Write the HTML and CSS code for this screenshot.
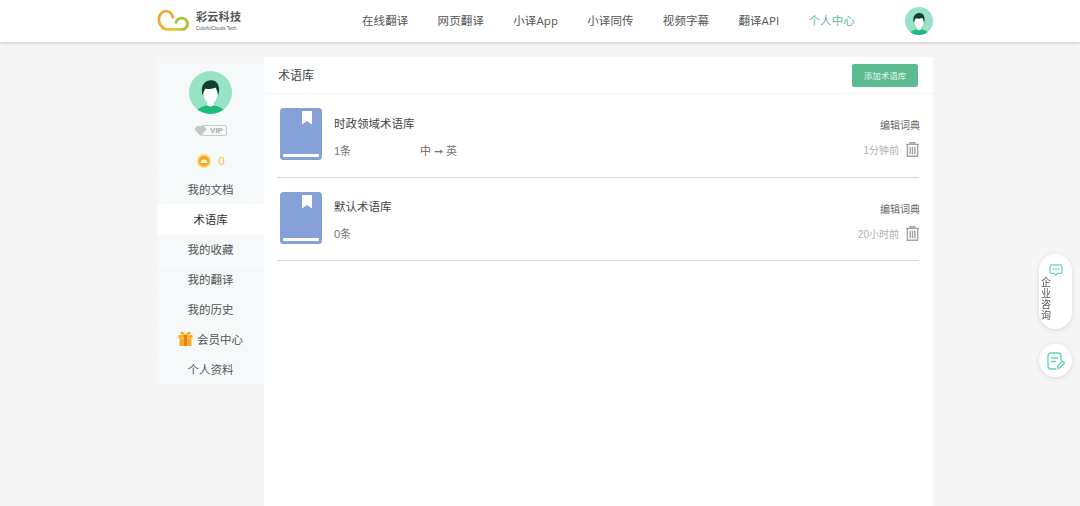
FILE: index.html
```html
<!DOCTYPE html>
<html lang="zh-CN">
<head>
<meta charset="utf-8">
<title>术语库</title>
<link rel="stylesheet" href="styles.css">
</head>
<body>
<svg class="defs" width="0" height="0" aria-hidden="true">
  <defs>
    <symbol id="avatar" viewBox="0 0 44 44">
      <circle cx="22" cy="22" r="22" fill="#98e2c6"/>
      <clipPath id="avclip"><circle cx="22" cy="22" r="22"/></clipPath>
      <g clip-path="url(#avclip)">
        <path d="M6 44c1-6 9-9 16-9s15 3 16 9z" fill="#1dbb7c"/>
        <path d="M18.500 28h7v6.500c-2 2.500-5 2.500-7 0z" fill="#fff"/>
        <ellipse cx="22" cy="24" rx="7" ry="9" fill="#fff"/>
        <path d="M14 25c-2.500-8 .5-15 8-15.500 7-.5 10.500 6 8 15.500-.6-3.500-1.500-6-2.800-8-2.700 1.500-7 1.800-10.200.8-1.500 1.700-2.400 4-3 7.200z" fill="#0f3f2e"/>
      </g>
    </symbol>
    <symbol id="book" viewBox="0 0 42 52">
      <rect width="42" height="52" rx="3.500" fill="#86a1d8"/>
      <rect x="3" y="46" width="36" height="3" rx="1" fill="#fff"/>
      <path d="M22 3h10v13.500l-5-3.500-5 3.500z" fill="#fff"/>
    </symbol>
    <symbol id="trash" viewBox="0 0 14 16">
      <path d="M0 2.500h14M4.500 2.500V.7h5v1.800M1.500 2.500v12.800h11V2.500M4.500 5v8M7 5v8M9.500 5v8" fill="none" stroke="#a4a4a4" stroke-width="1.500"/>
    </symbol>
  </defs>
</svg>

<header class="topbar">
  <div class="topbar-inner">
    <a class="logo" href="#">
      <svg class="logo-mark" viewBox="0 0 34 24" width="32" height="23" aria-hidden="true">
        <defs>
          <linearGradient id="logo-base" x1="0" x2="1" y1="0" y2="0">
            <stop offset="0" stop-color="#f5b035"/>
            <stop offset=".6" stop-color="#e6cb3a"/>
            <stop offset="1" stop-color="#a5c63f"/>
          </linearGradient>
        </defs>
        <path d="M17 8.500C15.500 4 12.500 2 9.500 2 5 2 2 6 2 11c0 4 2 7 5 9" fill="none" stroke="#f2a93b" stroke-width="3" stroke-linecap="round"/>
        <path d="M20 14c1-2.500 3-4.500 6.500-4.500 3 0 6 2.500 6 6 0 2.500-1.500 4.500-3.500 5.500" fill="none" stroke="#a5c63f" stroke-width="3" stroke-linecap="round"/>
        <path d="M5 19.500c2 1.500 4.500 2 7 2h14c1.200 0 2.200-.2 3-.6" fill="none" stroke="url(#logo-base)" stroke-width="3"/>
      </svg>
      <span class="logo-text">
        <span class="logo-cn">彩云科技</span>
        <span class="logo-en">ColorfulClouds Tech.</span>
      </span>
    </a>
    <nav class="nav">
      <a href="#">在线翻译</a>
      <a href="#">网页翻译</a>
      <a href="#">小译App</a>
      <a href="#">小译同传</a>
      <a href="#">视频字幕</a>
      <a href="#">翻译API</a>
      <a href="#" class="current">个人中心</a>
    </nav>
    <svg class="nav-avatar" width="28" height="28"><use href="#avatar"/></svg>
  </div>
</header>

<div class="page">
  <aside class="sidebar">
    <div class="profile">
      <svg class="profile-avatar" width="43" height="43"><use href="#avatar"/></svg>
      <div class="vip">
        <svg width="13" height="10" viewBox="0 0 11 9" aria-hidden="true"><path d="M2.500 0h6L11 3 5.500 9 0 3z" fill="#c4c6c6"/></svg>
        <span class="vip-tag">VIP</span>
      </div>
      <div class="coins">
        <svg width="14" height="14" viewBox="0 0 14 14" aria-hidden="true">
          <circle cx="7" cy="7" r="7" fill="#fbd96a"/>
          <circle cx="7" cy="7" r="5.200" fill="#f2a431"/>
          <path d="M3.500 9c0-2 1.500-3.500 3.500-3.500S10.500 7 10.500 9z" fill="#fff3cf"/>
        </svg>
        <span>0</span>
      </div>
    </div>
    <ul class="menu">
      <li>我的文档</li>
      <li class="active">术语库</li>
      <li>我的收藏</li>
      <li>我的翻译</li>
      <li>我的历史</li>
      <li class="member">
        <svg width="15" height="15" viewBox="0 0 15 15" aria-hidden="true">
          <path d="M7.500 4C5.500.5 3 .2 2.500 1.500 2 3 4 4 7.500 4zM7.500 4c2-3.500 4.500-3.800 5-2.500.5 1.500-1.500 2.500-5 2.500z" fill="#f9a825"/>
          <rect x="0.500" y="4" width="14" height="3.500" fill="#fbb02d"/>
          <rect x="1.500" y="7.500" width="12" height="7.500" fill="#f9a825"/>
          <rect x="6" y="4" width="3" height="11" fill="#ef7d17"/>
        </svg>
        <span>会员中心</span>
      </li>
      <li>个人资料</li>
    </ul>
  </aside>

  <main class="content">
    <div class="content-head">
      <h1>术语库</h1>
      <button class="add-btn" type="button">添加术语库</button>
    </div>
    <section class="entries">
      <article class="entry">
        <svg class="book" width="42" height="52"><use href="#book"/></svg>
        <div class="entry-body">
          <div class="entry-row title-row">
            <h2>时政领域术语库</h2>
            <a class="edit" href="#">编辑词典</a>
          </div>
          <div class="entry-row meta-row">
            <span class="count">1条</span>
            <span class="langs"><b>中</b> ➞ 英</span>
            <span class="time">1分钟前</span>
            <svg class="trash" width="13" height="15"><use href="#trash"/></svg>
          </div>
        </div>
      </article>
      <article class="entry">
        <svg class="book" width="42" height="52"><use href="#book"/></svg>
        <div class="entry-body">
          <div class="entry-row title-row">
            <h2>默认术语库</h2>
            <a class="edit" href="#">编辑词典</a>
          </div>
          <div class="entry-row meta-row">
            <span class="count">0条</span>
            <span class="time">20小时前</span>
            <svg class="trash" width="13" height="15"><use href="#trash"/></svg>
          </div>
        </div>
      </article>
    </section>
  </main>
</div>

<div class="float-tools">
  <div class="consult">
    <svg width="14" height="12" viewBox="0 0 16 14" aria-hidden="true">
      <path d="M3 1h10a2 2 0 0 1 2 2v6a2 2 0 0 1-2 2h-3l-2 2-2-2H3a2 2 0 0 1-2-2V3a2 2 0 0 1 2-2z" fill="none" stroke="#5fd8ae" stroke-width="1.400"/>
      <circle cx="5" cy="6" r="1" fill="#5fd8ae"/><circle cx="8" cy="6" r="1" fill="#5fd8ae"/><circle cx="11" cy="6" r="1" fill="#5fd8ae"/>
    </svg>
    <span class="consult-text">企业咨询</span>
  </div>
  <div class="note">
    <svg width="18" height="18" viewBox="0 0 18 18" aria-hidden="true">
      <path d="M9 17H4a3 3 0 0 1-3-3V4a3 3 0 0 1 3-3h7a3 3 0 0 1 3 3v4M4.500 6h6M4.500 9.500h4" fill="none" stroke="#5fd8ae" stroke-width="1.400" stroke-linecap="round"/>
      <path d="M11 16.500l-.5-2.500 5-5 2 2-5 5z" fill="none" stroke="#5fd8ae" stroke-width="1.300" stroke-linejoin="round"/>
    </svg>
  </div>
</div>
</body>
</html>
```

FILE: styles.css
```css
* { box-sizing: border-box; }
html, body { margin: 0; padding: 0; height: 100%; overflow: hidden; }
body {
  background: #f5f5f5;
  color: #444;
  font-family: "Liberation Sans", "Noto Sans CJK SC", sans-serif;
  font-size: 12px;
}
.defs { position: absolute; }
a { color: inherit; text-decoration: none; }

.topbar {
  height: 42px;
  background: #fff;
  box-shadow: 0 1px 3px rgba(0, 0, 0, .2);
}
.topbar-inner {
  width: 776px;
  margin-left: 157px;
  height: 42px;
  display: flex;
  align-items: center;
}
.logo { display: flex; align-items: center; gap: 7px; width: 205px; }
.logo-mark { display: block; margin-top: -1px; }
.logo-text { display: flex; flex-direction: column; color: #555; }
.logo-cn { font-size: 11px; font-weight: 700; line-height: 13px; letter-spacing: .3px; }
.logo-en { font-size: 4.500px; line-height: 6px; margin-top: 2px; white-space: nowrap; }

.nav {
  display: flex;
  gap: 29.200px;
  font-family: "Open Sans", "Noto Sans CJK SC", sans-serif;
  font-size: 11.500px;
  letter-spacing: .1px;
  color: #555;
}
.nav a { line-height: 42px; white-space: nowrap; }
.nav a.current { color: #5dbb92; }
.nav-avatar { margin-left: auto; display: block; }

.page {
  width: 776px;
  margin: 15px 0 0 157px;
  display: flex;
  height: 449px;
  align-items: stretch;
}

.sidebar { width: 107px; flex: none; align-self: flex-start; }
.profile {
  height: 116.500px;
  padding-top: 14px;
  background: #f6f9f9;
  display: flex;
  flex-direction: column;
  align-items: center;
}
.profile-avatar { display: block; }
.vip { display: flex; align-items: center; margin-top: 11px; height: 11px; }
.vip svg { margin-right: -6px; position: relative; z-index: 1; }
.vip-tag {
  border: 1px solid #c9cccc;
  border-radius: 2px;
  font-size: 8px;
  line-height: 9px;
  font-weight: 700;
  color: #aaa;
  padding: 0 3px 0 8px;
}
.coins {
  display: flex;
  align-items: center;
  gap: 7px;
  margin-top: 18px;
  margin-left: 1px;
  color: #f6b84f;
  font-size: 11.500px;
  line-height: 14px;
}
.menu { list-style: none; margin: 0; padding: 0; }
.menu li {
  height: 30px;
  line-height: 30px;
  background: #f6f9f9;
  border-top: 1px solid #fbfdfd;
  text-align: center;
  font-size: 11.500px;
  color: #555;
}
.menu li.active { background: #fff; color: #333; border-top-color: #fff; }
.menu li.member { display: flex; align-items: center; justify-content: center; gap: 4px; padding-top: 1px; }
.menu li.member svg { margin-top: -3px; }

.content { flex: 1; background: #fff; }
.content-head {
  height: 37px;
  padding: 0 15px 0 14px;
  border-bottom: 1px solid #f3f3f3;
  display: flex;
  align-items: center;
  justify-content: space-between;
}
.content-head h1 { margin: -2px 0 0; font-size: 12px; font-weight: 400; color: #444; }
.add-btn {
  width: 66px;
  height: 23px;
  border: 0;
  border-radius: 2px;
  background: #5dbb92;
  color: #e6f6ef;
  font: 8.500px "Liberation Sans", "Noto Sans CJK SC", sans-serif;
  padding: 0;
}
.entries { padding: 0 14px 0 13px; }
.entry {
  height: 83.500px;
  border-bottom: 1px solid #d9d9d9;
  display: flex;
  align-items: flex-start;
  padding-top: 14px;
}
.book { display: block; margin-left: 3px; flex: none; }
.entry-body { flex: 1; margin-left: 12px; padding-top: 5.500px; }
.entry-row { display: flex; align-items: center; }
.title-row { height: 18px; }
.title-row h2 { margin: 0; font-size: 11.500px; font-weight: 400; color: #444; }
.edit { margin-left: auto; font-size: 10px; color: #666; position: relative; top: 2px; margin-right: -1px; }
.meta-row { margin-top: 9px; height: 18px; font-size: 11px; color: #777; }
.count { width: 86px; }
.langs { color: #777; }
.langs b { font-weight: 400; color: #7d6350; }
.time { margin-left: auto; color: #b0b0b0; font-size: 10px; }
.trash { display: block; margin-left: 7px; }

.float-tools {
  position: fixed;
  left: 1039px;
  top: 254px;
  width: 33px;
  display: flex;
  flex-direction: column;
  gap: 15px;
  align-items: center;
}
.consult {
  width: 33px;
  height: 75px;
  border-radius: 17px;
  background: #fff;
  box-shadow: 0 1px 5px rgba(0, 0, 0, .12);
  display: flex;
  flex-direction: column;
  align-items: center;
  padding-top: 10px;
}
.consult-text {
  width: 10px;
  margin-top: 1px;
  margin-left: -19px;
  font-size: 10px;
  line-height: 11px;
  color: #555;
  word-break: break-all;
}
.note {
  width: 33px;
  height: 33px;
  border-radius: 50%;
  background: #fff;
  box-shadow: 0 1px 5px rgba(0, 0, 0, .12);
  display: flex;
  align-items: center;
  justify-content: center;
}
```
